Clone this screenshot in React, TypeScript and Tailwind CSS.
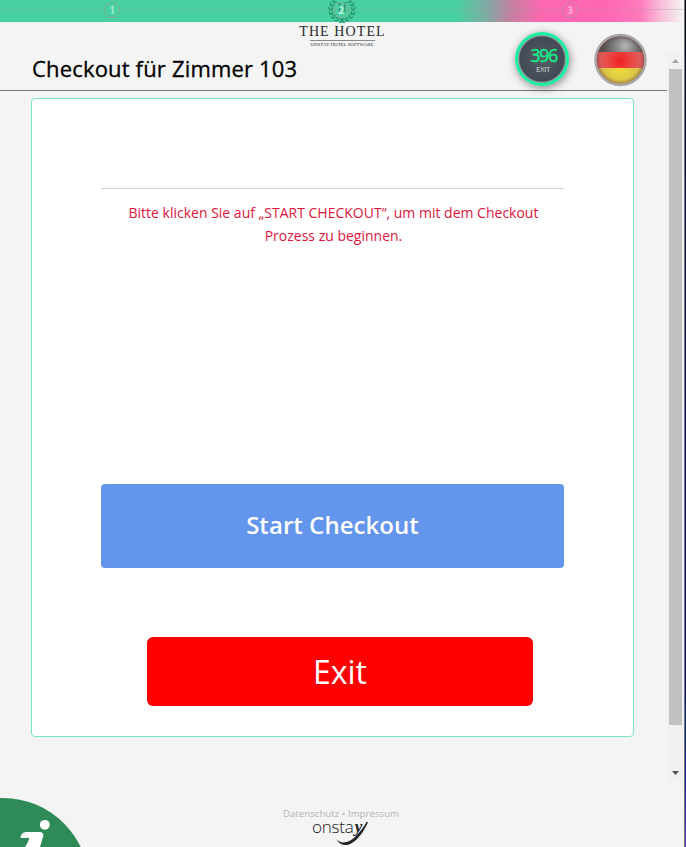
import React from "react";

const laurel = Array.from({ length: 14 }, (_, i) => {
  const side = i % 2 === 0 ? 1 : -1;
  const deg = 82 - Math.floor(i / 2) * 22;
  const a = (deg * Math.PI) / 180;
  return { x: 14 + side * 11.3 * Math.cos(a), y: 9.5 + 11.3 * Math.sin(a), deg: side === 1 ? deg - 90 : 270 - deg };
});

function Step({ n, className }: { n: number; className: string }) {
  return (
    <div className={`flex h-[16px] w-[16px] items-center justify-center rounded-full border text-[10px] leading-none font-bold ${className}`}>
      {n}
    </div>
  );
}

function Stepper() {
  return (
    <div className="relative h-[22px] shrink-0 bg-[linear-gradient(90deg,#48d1a0_0px,#48d1a0_456px,#7cacA4_485px,#c4819f_511px,#fb68b0_540px,#ff66b4_605px,#ff7abb_640px,#f8bbd7_660px,#f4f4f4_683px)]">
      <div className="absolute top-[9px] left-0 h-px w-full bg-[#9a9a9a]/35" />
      <svg className="absolute top-0 left-[327px]" width="30" height="24" viewBox="0 0 28 24">
        <g fill="#25976f">
          {laurel.map((l, i) => (
            <g key={i} transform={`translate(${l.x} ${l.y}) rotate(${l.deg})`}>
              <ellipse cx="0" cy="1.4" rx="2.2" ry="0.8" transform="rotate(28)" />
              <ellipse cx="0" cy="-1.4" rx="2.2" ry="0.8" transform="rotate(-28)" />
            </g>
          ))}
        </g>
        <path d="M11.5 3v9M17 3v9M10 3h3M15.5 3h3M11 7h6" stroke="#218f69" strokeWidth="1.2" fill="none" />
      </svg>
      <div className="relative flex pt-[2px] pl-[104px]">
        <Step n={1} className="border-[#7fab98] bg-[#48d1a0] text-[#a1e9cf]" />
        <Step n={2} className="ml-[213px] border-[#7fab98] text-[#b6f3de]" />
        <Step n={3} className="ml-[213px] border-[#c583a6] bg-[#fd68b2] text-[#ffabd6]" />
      </div>
    </div>
  );
}

function GermanFlag() {
  return (
    <svg width="54" height="54" viewBox="0 0 54 54">
      <defs>
        <clipPath id="disc"><circle cx="27.5" cy="27" r="24.5" /></clipPath>
        <radialGradient id="black" gradientUnits="userSpaceOnUse" cx="32" cy="13" r="22">
          <stop offset="0" stopColor="#b5b5b5" /><stop offset=".5" stopColor="#7d7d7d" /><stop offset="1" stopColor="#55534f" />
        </radialGradient>
        <radialGradient id="red" gradientUnits="userSpaceOnUse" cx="27" cy="28" r="25">
          <stop offset="0" stopColor="#f02020" /><stop offset=".5" stopColor="#ea4a48" /><stop offset="1" stopColor="#db6666" />
        </radialGradient>
        <radialGradient id="gold" gradientUnits="userSpaceOnUse" cx="27" cy="35" r="26">
          <stop offset="0" stopColor="#f0dc3c" /><stop offset="1" stopColor="#cdb54e" />
        </radialGradient>
        <radialGradient id="shade" cx="50%" cy="50%" r="50%">
          <stop offset=".8" stopColor="#63383d" stopOpacity="0" /><stop offset="1" stopColor="#63383d" stopOpacity=".5" />
        </radialGradient>
      </defs>
      <g clipPath="url(#disc)">
        <rect width="54" height="19" fill="url(#black)" />
        <rect y="19" width="54" height="16" fill="url(#red)" />
        <rect y="35" width="54" height="19" fill="url(#gold)" />
        <circle cx="27.5" cy="27" r="24.5" fill="url(#shade)" />
      </g>
      <circle cx="27.5" cy="27" r="25" fill="none" stroke="#aaa6a8" strokeWidth="2.4" />
    </svg>
  );
}

function Header() {
  return (
    <header className="relative flex h-[69px] shrink-0 border-b border-[#777] text-black">
      <h1 className="mt-[30px] ml-[32px] w-[484px] text-[22px] leading-[32px] font-medium tracking-[.17px] whitespace-nowrap [-webkit-text-stroke:.3px_black]">Checkout für Zimmer 103</h1>
      <div className="absolute top-0 left-[292px] flex w-[100px] flex-col items-center">
        <div className="mt-[3px] pl-px text-[14px] leading-[14px] tracking-[1.1px] whitespace-nowrap text-[#292929] [font-family:'Liberation_Serif',serif]">THE HOTEL</div>
        <div className="mt-px h-px w-[65px] bg-[#888]" />
        <div className="mt-[1px] text-[4.9px] leading-[6px] whitespace-nowrap text-[#333] [font-family:'Liberation_Serif',serif]">ONSTAY HOTEL SOFTWARE</div>
      </div>
      <button className="mt-[10px] -ml-px flex h-[54px] w-[54px] shrink-0 flex-col items-center rounded-full border-[3.5px] border-[#18efa0] bg-[radial-gradient(circle_closest-side,#555c64_0%,#414b55_92%,#9a9d9f_98%)] shadow-[1px_2px_8px_rgba(0,0,0,.45)]">
        <span className="mt-[12px] ml-[3px] text-[18px] leading-[17px] font-medium tracking-[-1.4px] text-[#19ec89] [-webkit-text-stroke:.4px_#19ec89]">396</span>
        <span className="ml-[2px] text-[8px] leading-[9px] tracking-[-.4px] text-[#d2d5d8]">EXIT</span>
      </button>
      <button className="mt-[11px] ml-[24px] h-[54px] w-[54px] shrink-0"><GermanFlag /></button>
    </header>
  );
}

function CheckoutCard() {
  return (
    <section className="mt-[7px] ml-[31px] flex h-[639px] w-[603px] shrink-0 flex-col rounded border border-[#79e7c4] bg-white px-[69px]">
      <hr className="mt-[89px] border-[#d1d1d1]" />
      <p className="mt-[12px] ml-[2px] text-center text-[14px] leading-[23px] text-[#dc143c]">
        Bitte klicken Sie auf „START CHECKOUT“, um mit dem Checkout<br />Prozess zu beginnen.
      </p>
      <button className="mt-[237px] h-[84px] w-[463px] shrink-0 rounded bg-[#6495ed] pb-[3px] text-[24px] font-semibold tracking-[.05px] text-white">Start Checkout</button>
      <button className="mt-[69px] ml-[46px] h-[69px] w-[386px] shrink-0 rounded-md bg-[#f00] text-[32px] text-white">Exit</button>
    </section>
  );
}

function Scrollbar() {
  return (
    <div className="mt-[30px] flex h-[730px] w-[17px] shrink-0 flex-col items-center bg-[#f1f1f1]">
      <svg className="shrink-0" width="17" height="17"><path d="M5 11h7L8.5 7z" fill="#a3a3a3" /></svg>
      <div className="h-[656px] w-[13px] bg-[#c1c1c1]" />
      <svg className="mt-[40px] shrink-0" width="17" height="17"><path d="M5 6h7L8.5 10z" fill="#505050" /></svg>
    </div>
  );
}

function Footer() {
  return (
    <footer className="relative flex min-h-0 flex-1 overflow-hidden">
      <div className="absolute top-[16px] left-[-83px] h-[176px] w-[172px] rounded-full bg-[#2e8b57]">
        <svg className="absolute top-0 left-[83px]" width="85" height="60" viewBox="0 0 85 60">
          <circle cx="44.8" cy="26.8" r="4.9" fill="white" />
          <path d="M20.5 40C21 36 23 34 27 34H39C43 34 44 36 43 39L36 62H18L20 49H25L28 44C30 40 29 39 26 40Z" fill="white" />
        </svg>
      </div>
      <div className="ml-[271px] flex w-[140px] flex-col items-center pt-[26px]">
        <div className="text-[9.7px] leading-[11px] whitespace-nowrap text-[#b5b5b5]">Datenschutz • Impressum</div>
        <div className="relative flex h-[28px] w-[62px] pl-[2px] text-[17px] leading-[15px] text-[#202020]">
          <span className="tracking-[-.2px] [font-family:'Open_Sans',sans-serif] [font-weight:300]">onsta</span>
          <span className="ml-px font-bold italic [font-family:'Liberation_Serif',serif]">y</span>
          <svg className="absolute top-0 left-0" width="62" height="28">
            <path d="M58 3C53 15 43 27.500 34 26C30.500 25.400 28 23 26 20C31 25.500 39 24 45 18C50 13 54 8 56.500 3Z" fill="#222" />
          </svg>
        </div>
      </div>
    </footer>
  );
}

export default function App() {
  return (
    <div className="flex h-[847px] w-[686px] overflow-hidden bg-[#f4f4f4] [font-family:'Open_Sans','Noto_Sans',sans-serif]">
      <div className="flex w-[684px] shrink-0 flex-col">
        <Stepper />
        <div className="flex h-[760px] shrink-0">
          <main className="flex w-[667px] shrink-0 flex-col">
            <Header />
            <CheckoutCard />
          </main>
          <Scrollbar />
        </div>
        <Footer />
      </div>
      <div className="w-px bg-[#777]" />
      <div className="w-px bg-[linear-gradient(#080b20_0%,#08086a_50%,#05056a_80%,#002c79_86%,#2020a0_92%,#5633b5_100%)]" />
    </div>
  );
}
